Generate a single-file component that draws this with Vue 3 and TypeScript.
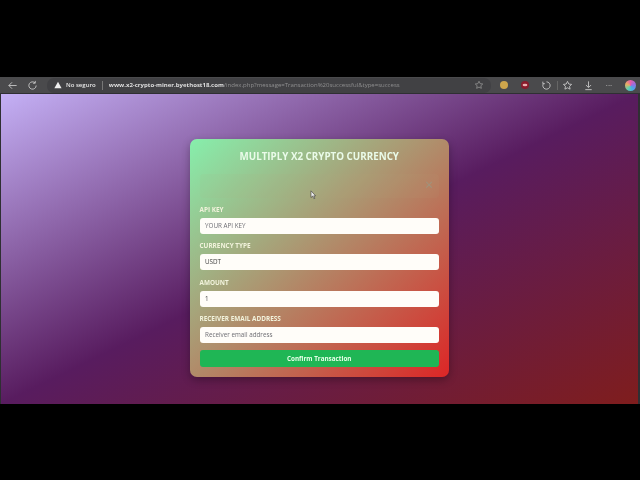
<script setup lang="ts">
const fields = [
  { label: 'API KEY', value: 'YOUR API KEY', muted: true },
  { label: 'CURRENCY TYPE', value: 'USDT', muted: false },
  { label: 'AMOUNT', value: '1', muted: false },
  { label: 'RECEIVER EMAIL ADDRESS', value: 'Receiver email address', muted: true },
]
</script>

<template>
  <div class="screen">
    <div class="browser">
      <div class="toolbar">
        <svg class="ico back" viewBox="0 0 12 12"><path d="M10.5 6H2M5.5 2.5 2 6l3.500 3.500" /></svg>
        <svg class="ico reload" viewBox="0 0 12 12"><path d="M10 6a4 4 0 1 1-1.200-2.850M9 1v2.500H6.500" /></svg>
        <div class="address">
          <svg class="warn" viewBox="0 0 10 10"><path d="M5 1 9.500 9H.5z" /></svg>
          <span class="secure">No seguro</span>
          <span class="divider"></span>
          <span class="url"><b>www.x2-crypto-miner.byethost18.com</b>/index.php?message=Transaction%20successful&amp;type=success</span>
          <svg class="ico star" viewBox="0 0 12 12"><path d="m6 1.500 1.400 2.900 3.100.4-2.300 2.100.6 3.100L6 8.500 3.200 10l.6-3.100L1.500 4.800l3.100-.4z" /></svg>
        </div>
        <div class="tools">
          <span class="ext yellow"></span>
          <svg class="ext-eye" viewBox="0 0 8 8"><circle cx="4" cy="4" r="4" fill="#8a1c2c" /><ellipse cx="4" cy="4" rx="2.400" ry="1.200" fill="#e8b0b0" /></svg>
          <svg class="ico" viewBox="0 0 12 12"><path d="M6 2a4 4 0 1 1-3.500 2M2 1.800V4h2.200" /></svg>
          <svg class="ico" viewBox="0 0 12 12"><path d="m6 1.500 1.400 2.900 3.100.4-2.300 2.100.6 3.100L6 8.500 3.200 10l.6-3.100L1.500 4.800l3.100-.4z" /></svg>
          <svg class="ico" viewBox="0 0 12 12"><path d="M6 1.500v6.500M3.200 5.500 6 8.300l2.800-2.800M2.500 10.500h7" /></svg>
          <span class="dots">···</span>
          <span class="copilot"></span>
          <span class="sep"></span>
        </div>
      </div>
      <main class="page">
        <section class="card">
          <h1>MULTIPLY X2 CRYPTO CURRENCY</h1>
          <div class="alert"><span class="close">×</span></div>
          <div v-for="f in fields" :key="f.label" class="field">
            <label>{{ f.label }}</label>
            <div class="input" :class="{ muted: f.muted }">{{ f.value }}</div>
          </div>
          <button class="confirm">Confirm Transaction</button>
          <svg class="cursor" viewBox="0 0 8 12"><path d="M1 1v8l2-1.800L4.500 10.500l1.200-.6L4.300 7H6.500z" /></svg>
        </section>
      </main>
    </div>
  </div>
</template>

<style>
html, body { margin: 0; background: #000; }
</style>

<style scoped>
.screen {
  width: 640px;
  height: 480px;
  overflow: hidden;
  background: #000;
  padding-top: 77px;
  box-sizing: border-box;
  font-family: "Open Sans", "Noto Sans", sans-serif;
}
.browser { filter: blur(0.45px); }
.toolbar {
  height: 16px;
  background: #4a4a4c;
  display: flex;
  align-items: center;
  padding: 0 0 0 7px;
}
.ico { width: 11px; height: 11px; flex: none; fill: none; stroke: #c4c4c4; stroke-width: 1; }
.back, .reload { margin-right: 9px; }
.address {
  flex: none;
  width: 444px;
  height: 15px;
  background: #414144;
  border-radius: 7px;
  display: flex;
  align-items: center;
  padding: 0 0 0 7px;
  box-sizing: border-box;
  color: #e6e6e6;
  font-size: 6.03px;
}
.warn { width: 8px; height: 8px; fill: #eee; margin-right: 4px; flex: none; }
.secure { font-weight: 600; }
.divider { width: 1px; height: 9px; background: #777; margin: 0 6px; }
.url { color: #8f8f90; white-space: nowrap; flex: 1; overflow: hidden; }
.url b { color: #dedede; font-weight: 700; }
.star { width: 10px; height: 10px; stroke: #8f8f8f; margin-right: 7px; }
.tools {
  position: relative;
  margin-left: 2.5px;
  display: grid;
  grid-template-columns: repeat(7, 21px);
  justify-items: center;
  align-items: center;
}
.ext { width: 8px; height: 8px; border-radius: 50%; }
.ext-eye { width: 8px; height: 8px; }
.yellow { background: #cfa64c; }
.sep { position: absolute; left: 63px; top: 1px; width: 1px; height: 9px; background: #666; }
.dots { color: #ccc; font-size: 8px; line-height: 8px; }
.copilot {
  width: 11px;
  height: 11px;
  border-radius: 50%;
  background: conic-gradient(#e75ea8, #9a6ce0, #4aa8e8, #5fd0b0, #e8b060, #e75ea8);
}
.page {
  height: 311px;
  background: linear-gradient(to bottom right, #c4b0f5 0%, #581c5f 50%, #7f1d1d 100%);
  display: flex;
  justify-content: center;
  padding-top: 45px;
  box-sizing: border-box;
  border-top: 1px solid #2f2f33;
  border-left: 1px solid #2f2f33;
  border-right: 2px solid #2f2f33;
}
.card {
  position: relative;
  width: 259px;
  height: 238px;
  box-sizing: border-box;
  padding: 11px 10px 0 9.5px;
  border-radius: 7px;
  background: linear-gradient(to bottom right, #86efac 0%, #dc2626 100%);
  box-shadow: 0 3px 8px rgba(0, 0, 0, 0.3);
  display: flex;
  flex-direction: column;
}
h1 {
  margin: 0 0 11px;
  color: #eafbe9;
  font-size: 9.8px;
  line-height: 13px;
  font-weight: 700;
  text-align: center;
}
.alert {
  height: 24px;
  margin-bottom: 7px;
  border-radius: 4px;
  position: relative;
  background: rgba(187, 165, 125, 0.07);
}
.close {
  position: absolute;
  right: 6px;
  top: 3px;
  color: #a0937c;
  font-size: 14px;
  line-height: 16px;
}
.field { display: flex; flex-direction: column; margin-bottom: 7.3px; }
label {
  color: #f2f3dc;
  font-size: 6.4px;
  line-height: 10px;
  font-weight: 700;
  margin-bottom: 3px;
  height: 10px;
}
.input {
  height: 16px;
  line-height: 16px;
  background: #fffdf9;
  border-radius: 3px;
  padding: 0 5.5px;
  color: #444;
  font-size: 6.3px;
}
.input.muted { color: #6e6e74; }
.confirm {
  height: 17px;
  border: 0;
  border-radius: 3px;
  background: #1fb655;
  color: #e8ffe9;
  font-family: inherit;
  font-size: 6.3px;
  font-weight: 700;
  padding: 0;
}
.cursor {
  position: absolute;
  left: 120px;
  top: 51px;
  width: 7px;
  height: 10px;
  fill: #eee;
  stroke: #333;
  stroke-width: 0.7;
}
</style>
